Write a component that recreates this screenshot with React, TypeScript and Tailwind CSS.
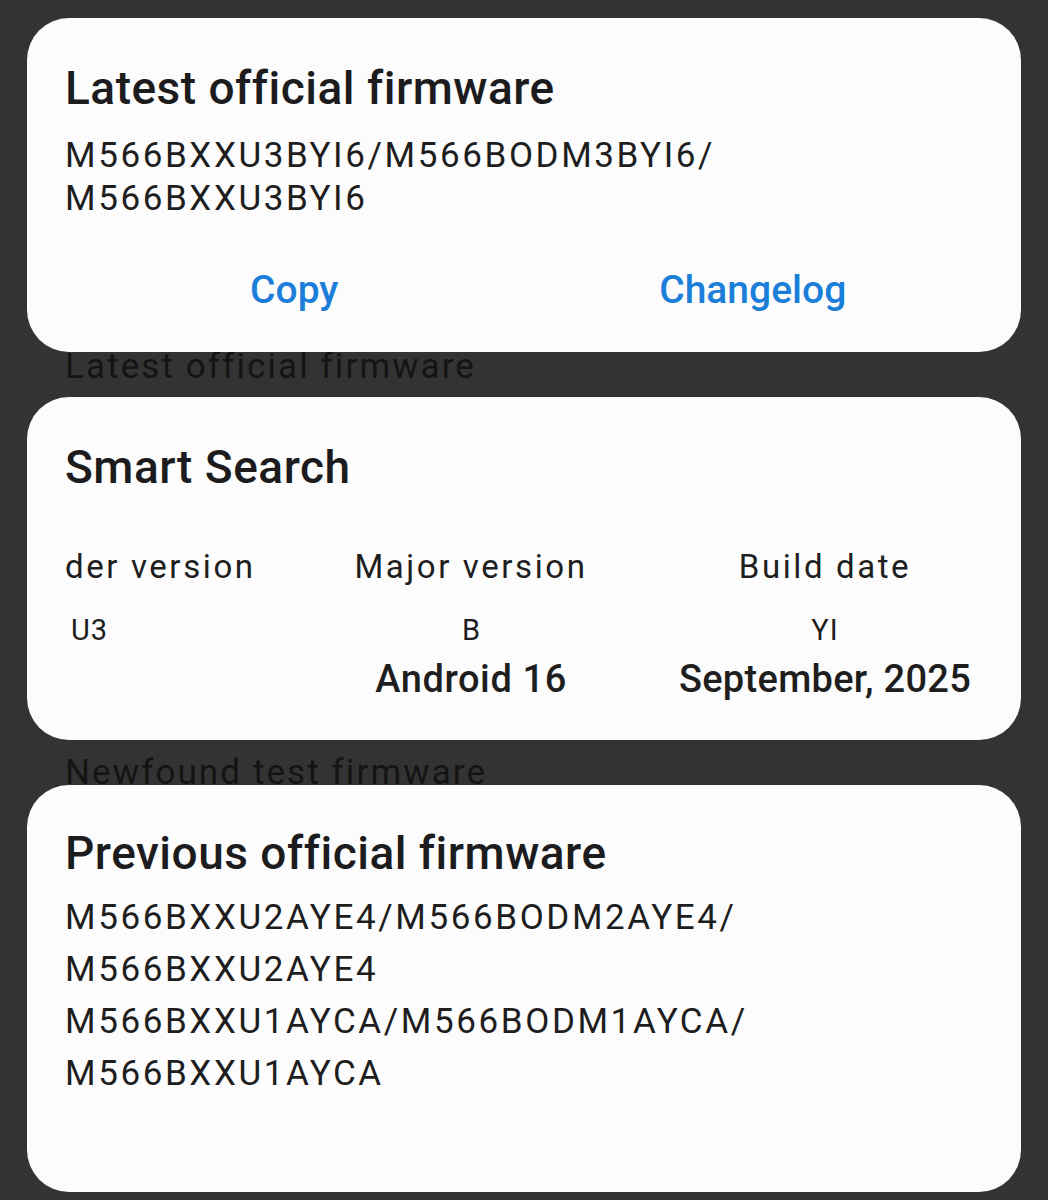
import type { ReactNode } from 'react'

const titleFont = { fontFamily: 'Roboto, "Noto Sans", sans-serif' }

function Card({ children, className = '' }: { children: ReactNode, className?: string }) {
  return (
    <section className={`rounded-[42px] bg-[#fcfcfc] pl-[38px] pr-[39px] ${className}`}>
      {children}
    </section>
  )
}

function CardTitle({ children }: { children: ReactNode }) {
  return (
    <h2 className="text-[46px] leading-[54px] font-medium tracking-[0.5px] text-[#1c1c1e]">
      {children}
    </h2>
  )
}

// text behind the cards, half covered by the card above or below
function HiddenLabel({ children, offset }: { children: ReactNode, offset: string }) {
  return (
    <div className="h-[45px] overflow-hidden pl-[38px]">
      <div className={`text-[35px] leading-[35px] text-[#141414] tracking-[2.1px] ${offset}`}>
        {children}
      </div>
    </div>
  )
}

export default function App() {
  return (
    <main
      className="min-h-[1200px] bg-[#333333] px-[27px] pt-[18px] pb-[8px]"
      style={titleFont}
    >
      <Card className="pt-[43px] pb-[39px]">
        <CardTitle>Latest official firmware</CardTitle>
        <div className="mt-[19px] text-[35px] leading-[43px] tracking-[2.6px] text-[#1e1e1e]">
          <div>M566BXXU3BYI6/M566BODM3BYI6/</div>
          <div>M566BXXU3BYI6</div>
        </div>
        <div className="mt-[47px] grid grid-cols-2 text-[39px] leading-[46px] font-medium text-[#1b7fd9]">
          <button type="button" className="text-center">Copy</button>
          <button type="button" className="text-center">Changelog</button>
        </div>
      </Card>

      <HiddenLabel offset="mt-[-3px]">Latest official firmware</HiddenLabel>

      <Card className="pt-[43px] pb-[39px]">
        <CardTitle>Smart Search</CardTitle>
        <div className="mt-[53px] grid grid-cols-[229px_354px_354px] text-[#1e1e1e]">
          <div className="text-[33px] leading-[40px] tracking-[2.6px]">der version</div>
          <div className="text-center text-[33px] leading-[40px] tracking-[2.6px]">Major version</div>
          <div className="text-center text-[33px] leading-[40px] tracking-[2.6px]">Build date</div>

          <div className="mt-[23px] pl-[6px] text-[29px] leading-[40px] tracking-[1px]">U3</div>
          <div className="mt-[23px] text-center text-[29px] leading-[40px]">B</div>
          <div className="mt-[23px] text-center text-[29px] leading-[40px] tracking-[1px]">YI</div>

          <div />
          <div className="mt-[7px] text-center text-[38px] leading-[44px] font-medium tracking-[0.6px]">Android 16</div>
          <div className="mt-[7px] text-center text-[38px] leading-[44px] font-medium tracking-[0.3px]">September, 2025</div>
        </div>
      </Card>

      <HiddenLabel offset="mt-[15px]">Newfound test firmware</HiddenLabel>

      <Card className="pt-[41px] pb-[92px]">
        <CardTitle>Previous official firmware</CardTitle>
        <div className="mt-[12px] text-[35px] leading-[52px] tracking-[2.6px] text-[#1e1e1e]">
          <div>M566BXXU2AYE4/M566BODM2AYE4/</div>
          <div>M566BXXU2AYE4</div>
          <div>M566BXXU1AYCA/M566BODM1AYCA/</div>
          <div>M566BXXU1AYCA</div>
        </div>
      </Card>
    </main>
  )
}
